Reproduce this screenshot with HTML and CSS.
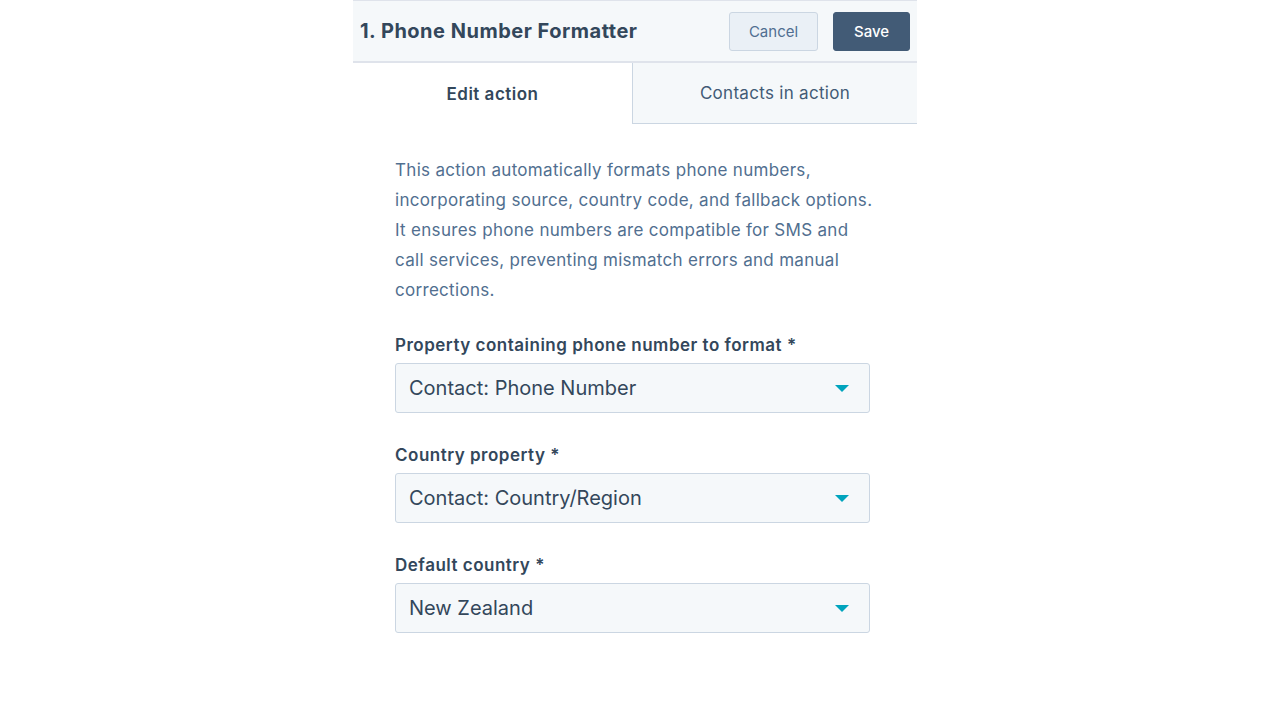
FILE: index.html
```html
<!DOCTYPE html>
<html lang="en">
<head>
  <meta charset="UTF-8" />
  <title>Phone Number Formatter</title>
  <link rel="stylesheet" href="styles.css">
</head>
<body>

  <div class="panel">
    <div class="panel-header">
      <h1 class="panel-title">1. Phone Number Formatter</h1>
      <div class="header-actions">
        <button class="btn btn-cancel">Cancel</button>
        <button class="btn btn-save">Save</button>
      </div>
    </div>

    <div class="tabs">
      <div class="tab active">Edit action</div>
      <div class="tab">Contacts in action</div>
    </div>

    <div class="panel-body">
      <p class="description">
        This action automatically formats phone numbers,<br>
        incorporating source, country code, and fallback options.<br>
        It ensures phone numbers are compatible for SMS and<br>
        call services, preventing mismatch errors and manual<br>
        corrections.
      </p>

      <div class="field">
        <label class="field-label">Property containing phone number to format *</label>
        <div class="select">
          <span>Contact: Phone Number</span>
          <span class="caret"></span>
        </div>
      </div>

      <div class="field">
        <label class="field-label">Country property *</label>
        <div class="select">
          <span>Contact: Country/Region</span>
          <span class="caret"></span>
        </div>
      </div>

      <div class="field">
        <label class="field-label">Default country *</label>
        <div class="select">
          <span>New Zealand</span>
          <span class="caret"></span>
        </div>
      </div>
    </div>
  </div>

</body>
</html>
```

FILE: styles.css
```css
* {
  box-sizing: border-box;
}

body {
  margin: 0;
  padding: 0 1px 0 0;
  background: #ffffff;
  font-family: 'Inter', 'Noto Sans', sans-serif;
  color: #33475b;
}

.panel {
  width: 564px;
  margin: 0 auto;
}

.panel-header {
  height: 63px;
  display: flex;
  align-items: center;
  justify-content: space-between;
  padding: 0 7px;
  background: #f5f8fa;
  border-top: 1px solid #dfe3eb;
  border-bottom: 2px solid #dfe3eb;
}

.panel-title {
  margin: 0;
  font-size: 20px;
  font-weight: 700;
  letter-spacing: 0.5px;
  color: #33475b;
}

.header-actions {
  display: flex;
  gap: 15px;
}

.btn {
  height: 39px;
  padding: 0;
  font-family: inherit;
  font-size: 15px;
  border-radius: 3px;
  cursor: pointer;
}

.btn-cancel {
  width: 89px;
  background: #eaf0f6;
  border: 1px solid #cbd6e2;
  color: #506e91;
}

.btn-save {
  width: 77px;
  background: #425b76;
  border: 1px solid #425b76;
  color: #ffffff;
  font-weight: 500;
}

.tabs {
  display: flex;
  height: 61px;
}

.tab {
  display: flex;
  align-items: center;
  justify-content: center;
  font-size: 17px;
  color: #33475b;
}

.tab.active {
  width: 279px;
  background: #ffffff;
  font-weight: 600;
  letter-spacing: 0.5px;
}

.tab:not(.active) {
  flex: 1;
  background: #f5f8fa;
  border-left: 1px solid #cbd6e2;
  border-bottom: 1px solid #cbd6e2;
  color: #425b76;
  letter-spacing: 0.3px;
}

.panel-body {
  padding: 31px 47px 0 42px;
}

.description {
  margin: 0 0 29px;
  font-size: 17px;
  line-height: 30px;
  letter-spacing: 0.3px;
  white-space: nowrap;
  color: #516f90;
}

.field {
  margin-bottom: 31px;
}

.field-label {
  display: block;
  font-size: 17px;
  font-weight: 600;
  line-height: 22px;
  letter-spacing: 0.5px;
  margin-bottom: 7px;
  color: #33475b;
}

.select {
  height: 50px;
  display: flex;
  align-items: center;
  justify-content: space-between;
  padding: 0 20px 0 13px;
  background: #f5f8fa;
  border: 1px solid #cbd6e2;
  border-radius: 3px;
  font-size: 20px;
  color: #33475b;
}

.caret {
  width: 0;
  height: 0;
  border-left: 7px solid transparent;
  border-right: 7px solid transparent;
  border-top: 7px solid #00a4bd;
}
```
